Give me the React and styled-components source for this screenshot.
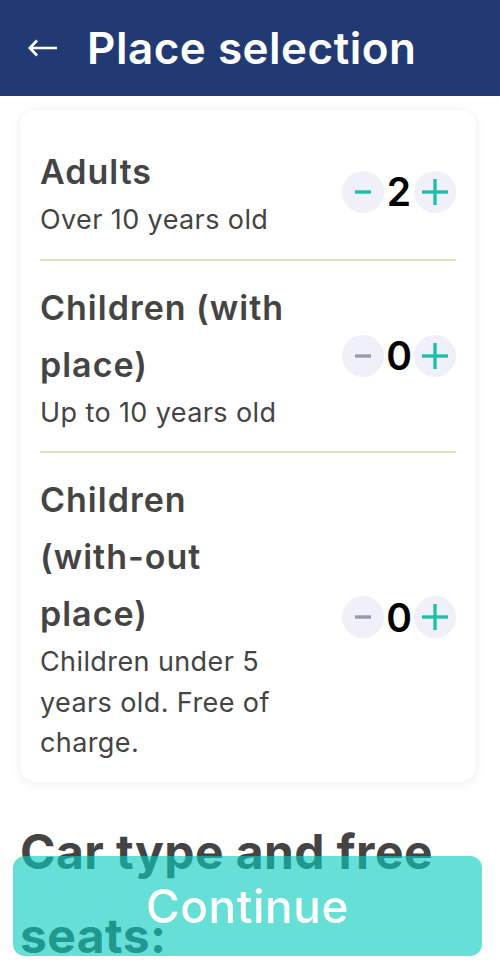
import React, { useState } from 'react';
import styled, { createGlobalStyle } from 'styled-components';

const GlobalStyle = createGlobalStyle`
  body {
    margin: 0;
    background: #ffffff;
    font-family: Inter, "Noto Sans", sans-serif;
  }
`;

const Page = styled.div`
  min-height: 978px;
  padding-bottom: 140px;
`;

const Header = styled.header`
  height: 96px;
  background-color: #213a74;
  display: flex;
  align-items: center;
  padding-left: 28px;
  gap: 29px;
  color: #fff;
`;

const BackButton = styled.button`
  background: none;
  border: none;
  padding: 0;
  display: flex;
  color: #fff;
  cursor: pointer;
`;

const Title = styled.h1`
  margin: 0;
  font-size: 44px;
  font-weight: 600;
  letter-spacing: 0.5px;
`;

const Card = styled.div`
  margin: 14px 24px 0 20px;
  background: #fff;
  border-radius: 16px;
  box-shadow: 0 1px 10px rgba(30, 40, 90, 0.09);
  padding: 15px 20px 0;
`;

const Row = styled.div`
  display: flex;
  align-items: center;
  gap: 30px;
  padding: 18px 0;
  border-bottom: 2px solid #e6dcbf;
  &:last-child {
    border-bottom: none;
  }
`;

const RowText = styled.div`
  flex: 1;
  color: #444;
`;

const RowTitle = styled.div`
  font-size: 34px;
  font-weight: 600;
  line-height: 57px;
  letter-spacing: 1px;
`;

const NoWrap = styled.span`
  white-space: nowrap;
`;

const RowSub = styled.div`
  font-size: 27px;
  line-height: 40.5px;
  letter-spacing: 0.4px;
`;

const Counter = styled.div`
  display: flex;
  align-items: center;
`;

const RoundButton = styled.button`
  width: 42px;
  height: 42px;
  border-radius: 50%;
  border: none;
  background: #f0f1f8;
  display: flex;
  align-items: center;
  justify-content: center;
  padding: 0;
  color: ${(p) => (p.$disabled ? '#9b9ba8' : '#1fbfab')};
  cursor: pointer;
`;

const Count = styled.span`
  width: 30px;
  text-align: center;
  font-size: 39px;
  font-weight: 600;
  color: #000;
`;

const SectionTitle = styled.h2`
  margin: 28px 20px 0;
  font-size: 48px;
  line-height: 84px;
  font-weight: 700;
  letter-spacing: 0.4px;
  color: #444;
`;

const ContinueButton = styled.button`
  position: fixed;
  left: 13px;
  width: 469px;
  bottom: 22px;
  height: 100px;
  border: none;
  border-radius: 12px;
  background: rgba(8, 205, 189, 0.62);
  color: #fff;
  font-family: Inter, "Noto Sans", sans-serif;
  font-size: 46px;
  font-weight: 500;
  letter-spacing: 0.5px;
  cursor: pointer;
`;

const Minus = () => (
  <svg width="18" height="18" viewBox="0 0 18 18">
    <line x1="1" y1="9" x2="17" y2="9" stroke="currentColor" strokeWidth="3.4" />
  </svg>
);

const Plus = () => (
  <svg width="28" height="28" viewBox="0 0 28 28">
    <line x1="1" y1="14" x2="27" y2="14" stroke="currentColor" strokeWidth="3.4" />
    <line x1="14" y1="1" x2="14" y2="27" stroke="currentColor" strokeWidth="3.4" />
  </svg>
);

const rows = [
  { id: 'adults', title: 'Adults', sub: 'Over 10 years old', value: 2 },
  { id: 'kids', title: 'Children (with place)', sub: 'Up to 10 years old', value: 0 },
  {
    id: 'infants',
    title: (
      <>
        Children <NoWrap>(with-out</NoWrap> place)
      </>
    ),
    sub: 'Children under 5 years old. Free of charge.',
    value: 0,
  },
];

const App = () => {
  const [counts, setCounts] = useState(
    Object.fromEntries(rows.map((r) => [r.id, r.value]))
  );

  const change = (id, d) =>
    setCounts((c) => ({ ...c, [id]: Math.max(0, c[id] + d) }));

  return (
    <Page>
      <GlobalStyle />
      <Header>
        <BackButton aria-label="Back">
          <svg width="30" height="18" viewBox="0 0 30 18" fill="none">
            <path d="M2 9H29M9 1.5L1.8 9L9 16.5" stroke="currentColor" strokeWidth="2.6" />
          </svg>
        </BackButton>
        <Title>Place selection</Title>
      </Header>

      <Card>
        {rows.map((r) => (
          <Row key={r.id}>
            <RowText>
              <RowTitle>{r.title}</RowTitle>
              <RowSub>{r.sub}</RowSub>
            </RowText>
            <Counter>
              <RoundButton $disabled={counts[r.id] === 0} onClick={() => change(r.id, -1)}>
                <Minus />
              </RoundButton>
              <Count>{counts[r.id]}</Count>
              <RoundButton onClick={() => change(r.id, 1)}>
                <Plus />
              </RoundButton>
            </Counter>
          </Row>
        ))}
      </Card>

      <SectionTitle>Car type and free seats:</SectionTitle>

      <ContinueButton>Continue</ContinueButton>
    </Page>
  );
};

export default App;
